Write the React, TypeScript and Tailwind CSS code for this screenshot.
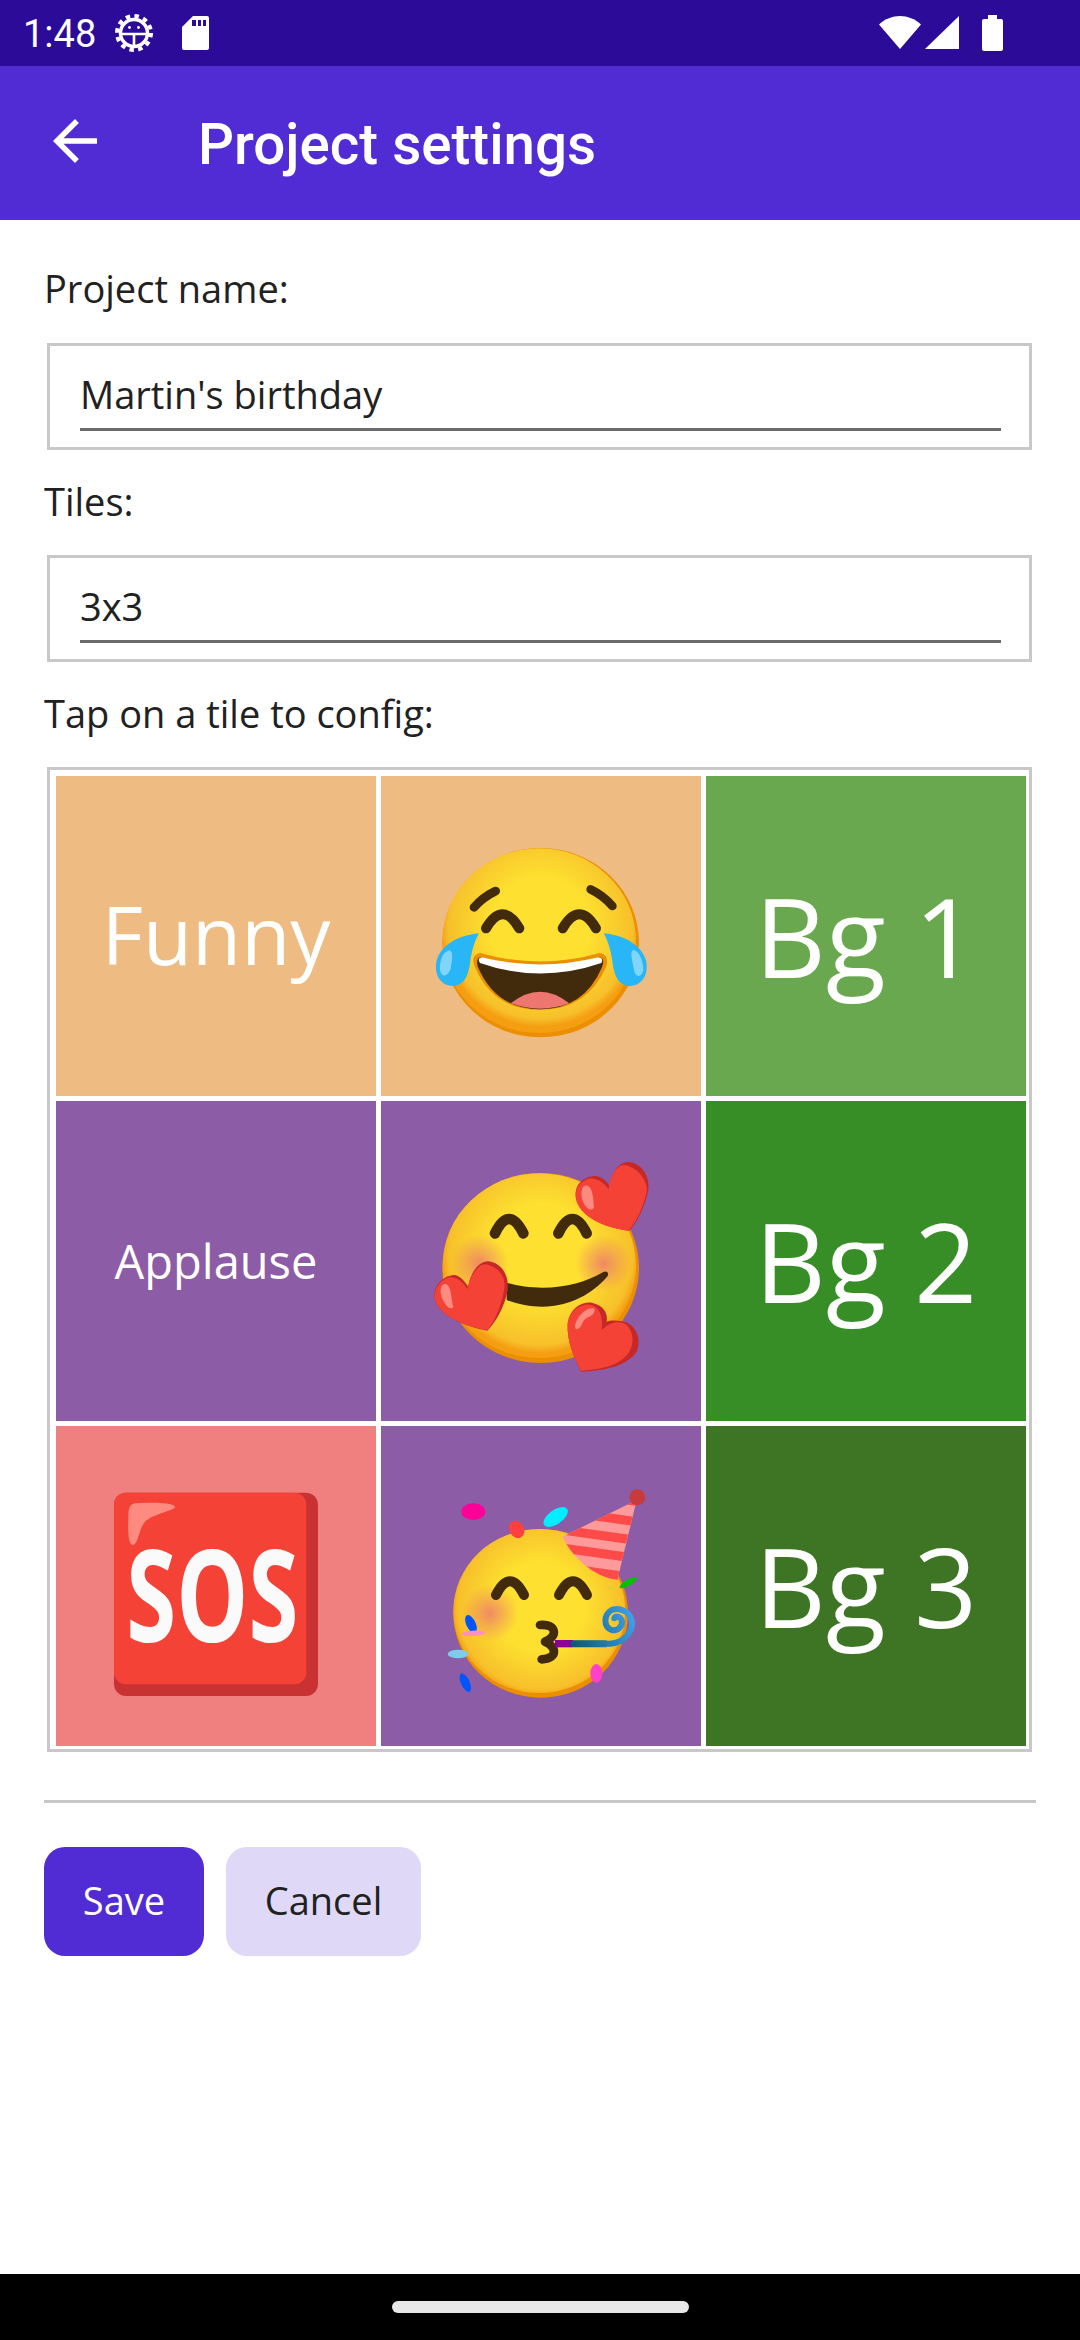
import type { ReactNode } from 'react';

const FACE_BROWN = '#422b0d';

const Field = ({ value }: { value: string }) => (
  <div className="ml-[3px] mr-[4px] h-[107px] border-[3px] border-[#c8c8c8] pl-[30px] pr-[28px] pt-[20px]">
    <div className="h-[65px] border-b-[3px] border-[#6b6b6b] text-[38px] leading-[56px] text-[#212121]">{value}</div>
  </div>
);

const Label = ({ children, className }: { children: string; className: string }) => (
  <div className={`h-[54px] text-[38px] leading-[54px] text-[#212121] ${className}`}>{children}</div>
);

const Tile = ({ bg, children }: { bg: string; children: ReactNode }) => (
  <div className={`flex h-[320px] w-[320px] items-center justify-center overflow-hidden text-white ${bg}`}>{children}</div>
);

const Gradients = ({ id, cx, cy, r }: { id: string; cx: number; cy: number; r: number }) => (
  <defs>
    <radialGradient id={id} gradientUnits="userSpaceOnUse" cx={cx} cy={cy} r={r}>
      <stop offset="0.5" stopColor="#fde030" />
      <stop offset="0.92" stopColor="#f7c02b" />
      <stop offset="1" stopColor="#f59e12" />
    </radialGradient>
    <radialGradient id={`${id}-blush`}>
      <stop offset="0" stopColor="#ed7770" stopOpacity="0.8" />
      <stop offset="1" stopColor="#ed7770" stopOpacity="0" />
    </radialGradient>
  </defs>
);

const LaughEmoji = () => (
  <svg className="h-full w-full" viewBox="3 -12 960 960">
    <Gradients id="laugh" cx={482} cy={440} r={300} />
    <ellipse cx="482" cy="488" rx="295" ry="284" fill="#eb8f00" />
    <ellipse cx="478" cy="482" rx="290" ry="277" fill="url(#laugh)" />
    <g fill="none" stroke={FACE_BROWN} strokeLinecap="round">
      <path d="M282 382Q308 352 347 333" strokeWidth="26" />
      <path d="M632 328Q671 347 697 378" strokeWidth="26" />
      <path d="M318 445Q368 361 418 445" strokeWidth="30" />
      <path d="M548 445Q598 361 648 445" strokeWidth="30" />
    </g>
    <path d="M300 519Q480 570 660 519Q690 525 678 562Q620 690 480 690Q340 690 285 562Q270 525 300 519Z" fill="#eb8f00" />
    <path d="M302 532Q480 580 658 532Q676 535 666 562Q612 688 480 688Q348 688 294 562Q286 535 302 532Z" fill={FACE_BROWN} />
    <path d="M305 532Q480 575 655 532Q672 535 664 549Q480 612 300 549Q290 535 305 532Z" fill="#fff" />
    <path d="M392 670Q480 600 568 670Q480 702 392 670Z" fill="#ed7770" />
    <path d="M297 460C240 465 190 490 172 535C158 580 180 618 220 618C255 615 265 585 270 550C275 510 285 480 297 460Z" fill="#29b6f6" />
    <path d="M205 512C220 510 218 530 212 565C205 590 185 595 180 570C178 540 190 515 205 512Z" fill="#81d4fa" />
    <path d="M671 460C728 465 778 490 796 535C810 580 788 618 748 618C713 615 703 585 698 550C693 510 683 480 671 460Z" fill="#29b6f6" />
    <path d="M760 510C775 510 790 540 790 570C785 595 765 592 762 570C757 540 748 512 760 510Z" fill="#81d4fa" />
  </svg>
);

const HeartsEmoji = () => (
  <svg className="h-full w-full" viewBox="3 3 960 960">
    <Gradients id="hearts" cx={482} cy={460} r={300} />
    <ellipse cx="482" cy="504" rx="295" ry="285" fill="#eb8f00" />
    <ellipse cx="478" cy="497" rx="290" ry="277" fill="url(#hearts)" />
    <circle cx="300" cy="490" r="85" fill="url(#hearts-blush)" />
    <circle cx="670" cy="490" r="85" fill="url(#hearts-blush)" />
    <g fill="none" stroke={FACE_BROWN} strokeLinecap="round" strokeWidth="32">
      <path d="M345 400Q387 314 430 400" />
      <path d="M535 400Q577 314 620 400" />
    </g>
    <path d="M670 516C620 545 560 563 487 563C450 563 410 558 380 548L380 600C410 612 450 620 487 620C570 620 640 580 683 528C688 518 680 511 670 516Z" fill={FACE_BROWN} />
    <path d="M748 392C690 385 610 360 590 300C575 250 620 225 650 228C670 232 685 250 690 262C690 225 715 185 745 186C790 190 810 235 805 270C795 320 770 370 748 392Z" fill="#c62828" />
    <path d="M745 392C690 385 610 360 590 305C575 255 620 232 640 236C665 240 680 260 686 268C690 235 705 195 735 195C780 205 805 250 800 275C790 320 770 365 745 392Z" fill="#f44336" />
    <path d="M618 256C640 260 640 300 642 322C635 340 610 320 605 290C603 270 608 258 618 256Z" fill="#ff8a80" />
    <path d="M322 692C260 680 180 650 165 600C155 560 190 525 225 525C245 530 258 550 265 560C270 520 295 484 325 484C365 490 388 525 383 570C375 620 345 670 322 692Z" fill="#c62828" />
    <path d="M322 690C260 680 180 650 165 600C157 565 190 530 215 532C240 535 255 555 262 568C268 530 295 492 315 493C355 500 378 530 373 565C365 615 345 665 322 690Z" fill="#f44336" />
    <path d="M195 552C215 555 212 590 220 620C210 635 190 610 183 585C180 565 185 553 195 552Z" fill="#ff8a80" />
    <path d="M603 815C580 770 560 720 563 670C570 625 605 605 635 608C670 615 685 640 680 665C690 660 725 660 745 670C770 685 785 720 770 755C740 800 670 812 603 815Z" fill="#c62828" />
    <path d="M603 813C580 770 560 720 563 670C570 630 605 610 630 614C660 620 670 650 665 690C690 665 720 660 740 675C760 695 765 730 745 760C715 800 660 808 603 813Z" fill="#f44336" />
    <path d="M640 625C625 622 595 640 585 675C583 695 600 690 607 670C612 650 640 650 643 635C644 628 643 625 640 625Z" fill="#ff8a80" />
  </svg>
);

const PartyEmoji = () => (
  <svg className="h-full w-full" viewBox="3 18 960 960">
    <Gradients id="party" cx={482} cy={560} r={270} />
    <defs>
      <clipPath id="hat-clip"><path d="M770 240L712 480C640 470 575 410 548 350Z" /></clipPath>
      <linearGradient id="blower" gradientUnits="userSpaceOnUse" x1="580" y1="671" x2="760" y2="600">
        <stop offset="0" stopColor="#0b5a75" />
        <stop offset="1" stopColor="#3d9fe8" />
      </linearGradient>
    </defs>
    <ellipse cx="482" cy="580" rx="262" ry="253" fill="#eb8f00" />
    <ellipse cx="478" cy="573" rx="258" ry="246" fill="url(#party)" />
    <circle cx="330" cy="580" r="85" fill="url(#party-blush)" />
    <g fill="none" stroke={FACE_BROWN} strokeLinecap="round">
      <path d="M348 525Q390 443 432 525" strokeWidth="30" />
      <path d="M537 525Q579 443 621 525" strokeWidth="30" />
      <path d="M480 615C530 610 535 650 495 665C530 680 535 715 485 718" strokeWidth="26" strokeLinejoin="round" />
    </g>
    <path d="M770 240L712 480C640 470 575 410 548 350Z" fill="#ff9a9a" />
    <g clipPath="url(#hat-clip)" stroke="#ff4a4a" strokeWidth="27">
      <path d="M540 212L790 247" />
      <path d="M540 273L790 308" />
      <path d="M540 329L790 364" />
      <path d="M540 383L790 418" />
      <path d="M540 442L790 477" />
    </g>
    <circle cx="772" cy="232" r="24" fill="#c93a3a" />
    <ellipse cx="280" cy="275" rx="36" ry="25" fill="#ff0099" />
    <ellipse cx="410" cy="328" rx="22" ry="27" fill="#ff4040" transform="rotate(-30 410 328)" />
    <ellipse cx="527" cy="291" rx="42" ry="21" fill="#00eeff" transform="rotate(-35 527 291)" />
    <ellipse cx="745" cy="488" rx="30" ry="9" fill="#00c000" transform="rotate(-30 745 488)" />
    <ellipse cx="273" cy="612" rx="14" ry="29" fill="#0055ff" transform="rotate(-25 273 612)" />
    <ellipse cx="280" cy="640" rx="36" ry="8" fill="#ff8fc0" transform="rotate(-3 280 640)" />
    <ellipse cx="234" cy="702" rx="31" ry="13" fill="#7ccdeb" />
    <ellipse cx="256" cy="788" rx="13" ry="30" fill="#0055ff" transform="rotate(-25 256 788)" />
    <ellipse cx="649" cy="760" rx="18" ry="28" fill="#ff40c8" />
    <rect x="525" y="660" width="55" height="22" fill="#8b0094" />
    <g fill="none" stroke="url(#blower)" strokeLinecap="round">
      <path d="M580 671H690C735 668 758 632 756 605C750 575 720 560 695 570C670 585 670 620 695 630C715 635 730 615 725 600C720 590 705 585 703 595" strokeWidth="18" />
      <path d="M580 671H680" strokeWidth="21" strokeLinecap="butt" />
    </g>
  </svg>
);

const SosEmoji = () => (
  <svg className="h-full w-full" viewBox="48 18 960 960">
    <rect x="222" y="218" width="612" height="610" rx="36" fill="#c93232" />
    <rect x="222" y="218" width="577" height="575" rx="36" fill="#f44336" />
    <path d="M285 250C320 248 395 245 405 260C405 272 340 280 315 305C295 330 295 375 277 375C262 370 265 320 265 290C265 265 270 252 285 250Z" fill="#ff8a80" />
    <text x="259" y="667" fontFamily="'Open Sans', sans-serif" fontWeight="700" fontSize="384" textLength="516" lengthAdjust="spacingAndGlyphs" fill="#fafafa">SOS</text>
  </svg>
);

const GearIcon = () => (
  <svg width="38" height="38" viewBox="0 0 38 38">
    <circle cx="19" cy="19" r="17" fill="none" stroke="#fff" strokeWidth="4" strokeDasharray="4.45 4.45" />
    <circle cx="19" cy="19" r="13.5" fill="none" stroke="#fff" strokeWidth="3.5" />
    <path d="M6 20H32M19 20V32" stroke="#fff" strokeWidth="2.6" fill="none" />
    <circle cx="14.5" cy="13.5" r="1.4" fill="#fff" />
    <circle cx="23.5" cy="13.5" r="1.4" fill="#fff" />
  </svg>
);

const SdCardIcon = () => (
  <svg width="27" height="34" viewBox="0 0 27 34">
    <path d="M11 0H25A2 2 0 0 1 27 2V32A2 2 0 0 1 25 34H2A2 2 0 0 1 0 32V11Z" fill="#fff" />
    <path d="M10 4H14V10H10ZM16 4H19V10H16ZM21 4H24V10H21Z" fill="#2b0b98" />
  </svg>
);

const WifiIcon = () => (
  <svg width="42" height="36" viewBox="0 0 42 36">
    <path d="M21 34L0 9.5C12 -2 30 -2 42 9.5Z" fill="#fff" />
  </svg>
);

const SignalIcon = () => (
  <svg width="35" height="36" viewBox="0 0 35 36">
    <path d="M35 1V34H1Z" fill="#fff" />
  </svg>
);

const BatteryIcon = () => (
  <svg width="21" height="36" viewBox="0 0 21 36">
    <path d="M6 0H15V4H19A2 2 0 0 1 21 6V34A2 2 0 0 1 19 36H2A2 2 0 0 1 0 34V6A2 2 0 0 1 2 4H6Z" fill="#fff" />
  </svg>
);

const BackArrow = () => (
  <svg className="mt-[42px] shrink-0" width="66" height="66" viewBox="0 0 24 24" fill="#fff">
    <path d="M20 11H7.83l5.59-5.59L12 4l-8 8 8 8 1.41-1.41L7.83 13H20v-2z" />
  </svg>
);

export default function App() {
  return (
    <div className="flex h-[2340px] w-[1080px] flex-col bg-white font-['Open_Sans',sans-serif]">
      <div className="flex h-[66px] shrink-0 justify-between bg-[#2b0b98] pl-[23px] pr-[77px] pt-[14px] text-white">
        <div className="flex items-start">
          <span className="font-['Roboto',sans-serif] text-[38px] leading-[40px]">1:48</span>
          <div className="ml-[19px]"><GearIcon /></div>
          <div className="ml-[29px] mt-[2px]"><SdCardIcon /></div>
        </div>
        <div className="flex items-start gap-[3px] pt-[1px]">
          <WifiIcon />
          <SignalIcon />
          <div className="ml-[20px]"><BatteryIcon /></div>
        </div>
      </div>

      <div className="flex h-[154px] shrink-0 items-start bg-[#512bd4] pl-[42px]">
        <BackArrow />
        <div className="ml-[90px] mt-[44px] font-['Roboto',sans-serif] text-[56.5px] font-medium leading-[70px] text-white">Project settings</div>
      </div>

      <div className="flex-1 px-[44px] pt-[41px]">
        <Label className="mb-[28px]">Project name:</Label>
        <Field value="Martin's birthday" />
        <Label className="mb-[27px] mt-[24px]">Tiles:</Label>
        <Field value="3x3" />
        <Label className="mb-[27px] mt-[24px]">Tap on a tile to config:</Label>

        <div className="ml-[3px] mr-[4px] border-[3px] border-[#c8c8c8] pb-[3px] pl-[6px] pr-[3px] pt-[6px]">
          <div className="grid grid-cols-[320px_320px_320px] gap-[5px]">
            <Tile bg="bg-[#eebc82]"><span className="pb-[4px] text-[80px]">Funny</span></Tile>
            <Tile bg="bg-[#eebc82]"><LaughEmoji /></Tile>
            <Tile bg="bg-[#6aa84f]"><span className="pb-[2px] text-[110px]">Bg 1</span></Tile>
            <Tile bg="bg-[#8c5ca6]"><span className="text-[47px]">Applause</span></Tile>
            <Tile bg="bg-[#8c5ca6]"><HeartsEmoji /></Tile>
            <Tile bg="bg-[#388e26]"><span className="pb-[2px] text-[110px]">Bg 2</span></Tile>
            <Tile bg="bg-[#f08080]"><SosEmoji /></Tile>
            <Tile bg="bg-[#8c5ca6]"><PartyEmoji /></Tile>
            <Tile bg="bg-[#3e7525]"><span className="pb-[2px] text-[110px]">Bg 3</span></Tile>
          </div>
        </div>

        <div className="mt-[48px] h-[3px] bg-[#c8c8c8]" />

        <div className="mt-[44px] flex gap-[22px]">
          <div className="flex h-[109px] w-[160px] items-center justify-center rounded-[21px] bg-[#512bd4] pb-[3px] text-[38px] text-white">Save</div>
          <div className="flex h-[109px] w-[195px] items-center justify-center rounded-[21px] bg-[#dfd8f7] pb-[3px] text-[38px] text-[#212121]">Cancel</div>
        </div>
      </div>

      <div className="flex h-[66px] shrink-0 justify-center bg-black pt-[27px]">
        <div className="h-[12px] w-[297px] rounded-full bg-[#e8e8e8]" />
      </div>
    </div>
  );
}
